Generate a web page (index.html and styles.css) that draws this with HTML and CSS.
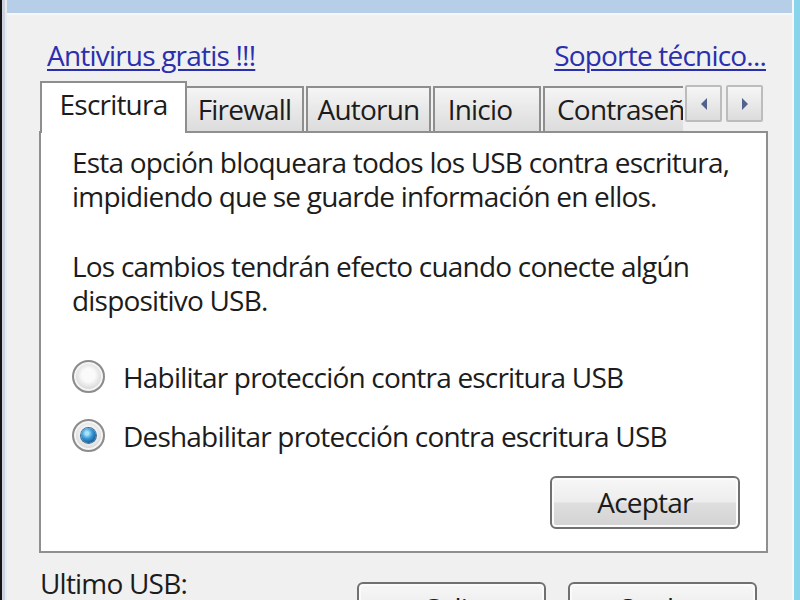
FILE: index.html
```html
<!DOCTYPE html>
<html lang="es">
<head>
<meta charset="utf-8">
<title>USB</title>
<link rel="stylesheet" href="styles.css">
</head>
<body>
<div class="screen">
  <div class="frame-left"></div>
  <div class="window">
    <div class="titlebar"></div>
    <div class="client">
      <div class="links">
        <a class="link" href="#">Antivirus gratis !!!</a>
        <a class="link" href="#">Soporte técnico...</a>
      </div>
      <div class="tabbar">
        <div class="tabs">
          <div class="tab tab-active">Escritura</div>
          <div class="tab tab-firewall">Firewall</div>
          <div class="tab tab-autorun">Autorun</div>
          <div class="tab tab-inicio">Inicio</div>
          <div class="tab tab-pass">Contraseñas</div>
        </div>
        <div class="scrollers">
          <div class="scroll"><svg width="8" height="12" viewBox="0 0 8 12"><polygon points="7,0 7,12 1,6" fill="#52628f"/></svg></div>
          <div class="scroll"><svg width="8" height="12" viewBox="0 0 8 12"><polygon points="1,0 1,12 7,6" fill="#52628f"/></svg></div>
        </div>
      </div>
      <div class="panel">
        <p class="para">Esta opción bloqueara todos los USB contra escritura,<br>impidiendo que se guarde información en ellos.</p>
        <p class="para">Los cambios tendrán efecto cuando conecte algún<br>dispositivo USB.</p>
        <div class="radios">
          <div class="radio"><span class="radio-dot"></span><span>Habilitar protección contra escritura USB</span></div>
          <div class="radio radio-checked"><span class="radio-dot"></span><span>Deshabilitar protección contra escritura USB</span></div>
        </div>
        <div class="actions"><button class="btn">Aceptar</button></div>
      </div>
      <div class="footer">
        <div class="last">Ultimo USB:</div>
        <div class="footer-buttons">
          <button class="btn btn-small">Salir</button>
          <button class="btn btn-small">Ocultar</button>
        </div>
      </div>
    </div>
  </div>
  <div class="frame-right"></div>
</div>
</body>
</html>
```
FILE: styles.css
```css
* { box-sizing: border-box; }
html, body { margin: 0; padding: 0; }
body {
  width: 800px;
  height: 600px;
  overflow: hidden;
  background: #f0f0f0;
  font-family: "Open Sans", "Noto Sans", sans-serif;
  font-size: 28px;
  line-height: 38px;
  letter-spacing: -0.8px;
  color: #1c1c1c;
}
.screen { display: flex; width: 800px; height: 600px; }
.frame-left {
  width: 7px;
  flex: none;
  background: linear-gradient(to right, #141414 0 2px, #cbd4de 2px 5px, #e8ebee 5px);
}
.frame-right {
  width: 8px;
  flex: none;
  background: linear-gradient(to right, #f5f7f9 0 2px, #88d5eb 2px);
}
.window { flex: 1; min-width: 0; display: flex; flex-direction: column; }
.titlebar {
  height: 15px;
  flex: none;
  background: #b6cee7;
  border-bottom: 2px solid #f5f7f9;
}
.client {
  flex: 1;
  min-height: 0;
  display: flex;
  flex-direction: column;
  padding: 0 24px 0 32px;
}
.links {
  display: flex;
  justify-content: space-between;
  margin-top: 21px;
  padding: 0 2px 0 8px;
}
.link {
  color: #2b2fae;
  text-decoration: underline;
  text-decoration-thickness: 2px;
  text-underline-offset: 3px;
}
.tabbar {
  display: flex;
  align-items: flex-start;
  height: 52px;
  flex: none;
  margin-top: 7px;
  margin-bottom: -2px;
  position: relative;
  z-index: 1;
}
.tabs {
  flex: 1;
  min-width: 0;
  height: 52px;
  display: flex;
  align-items: flex-start;
  overflow: hidden;
  margin-left: 1px;
}
.tab {
  flex: none;
  height: 45px;
  margin-top: 5px;
  margin-left: 2px;
  padding-top: 2px;
  border: 2px solid #8e8e8e;
  border-bottom: none;
  background: linear-gradient(#f5f5f5, #e8e8e8 50%, #dcdcdc);
  text-align: center;
  white-space: nowrap;
}
.tab-active {
  height: 52px;
  margin-top: 0;
  margin-left: 0;
  width: 147px;
  background: #fff;
}
.tab-firewall { width: 117px; margin-left: 0; border-left: none; }
.tab-autorun { width: 125px; }
.tab-inicio { width: 108px; padding-right: 14px; }
.tab-pass { width: 170px; text-align: left; padding-left: 12px; }
.scrollers {
  flex: none;
  display: flex;
  gap: 4px;
  margin: 4px 5px 0 2px;
}
.scroll {
  width: 37px;
  height: 37px;
  border: 2px solid #bcbcbc;
  border-radius: 2px;
  background: linear-gradient(#f6f6f6, #e9e9e9 50%, #dcdcdc);
  display: flex;
  align-items: center;
  justify-content: center;
}
.panel {
  height: 422px;
  flex: none;
  border: 2px solid #8f8f8f;
  background: #fff;
  padding: 12px 0 0 31px;
}
.para { margin: 0 0 36px; line-height: 34px; white-space: nowrap; }
.para + .para { margin-bottom: 0; }
.radios { margin-top: 30px; }
.radio {
  height: 59px;
  display: flex;
  align-items: center;
  gap: 18px;
  white-space: nowrap;
}
.radio-dot {
  width: 33px;
  height: 33px;
  flex: none;
  border-radius: 50%;
  border: 2px solid #8c8c8c;
  background: radial-gradient(circle at 50% 45%, #fafafa 0 30%, #e2e2e2 55%, #c9c9c9 80%);
  box-shadow: inset 0 0 0 2px #f4f4f4;
  display: flex;
  align-items: center;
  justify-content: center;
}
.radio-checked .radio-dot::after {
  content: "";
  width: 15px;
  height: 15px;
  border-radius: 50%;
  background: radial-gradient(circle at 40% 35%, #a9e2fb 0 12%, #3a9ad6 40%, #135a96 75%, #0b3a66);
  box-shadow: 0 0 0 1px #3f6f97;
}
.actions {
  display: flex;
  justify-content: flex-end;
  margin-top: 11px;
  margin-right: 26px;
}
.btn {
  width: 190px;
  height: 53px;
  border: 2px solid #707070;
  border-radius: 6px;
  background: linear-gradient(#f7f7f7, #ededed 48%, #dedede 52%, #d2d2d2);
  box-shadow: inset 0 0 0 2px #fbfbfb;
  font-family: inherit;
  font-size: 28px;
  letter-spacing: -0.8px;
  line-height: 49px;
  color: #1c1c1c;
  padding: 0;
}
.footer {
  display: flex;
  align-items: flex-start;
  margin-top: 11px;
  padding: 0 11px 0 1px;
}
.footer-buttons {
  margin-left: auto;
  margin-top: 18px;
  display: flex;
  gap: 22px;
}
.btn-small { width: 189px; flex: none; }
```
